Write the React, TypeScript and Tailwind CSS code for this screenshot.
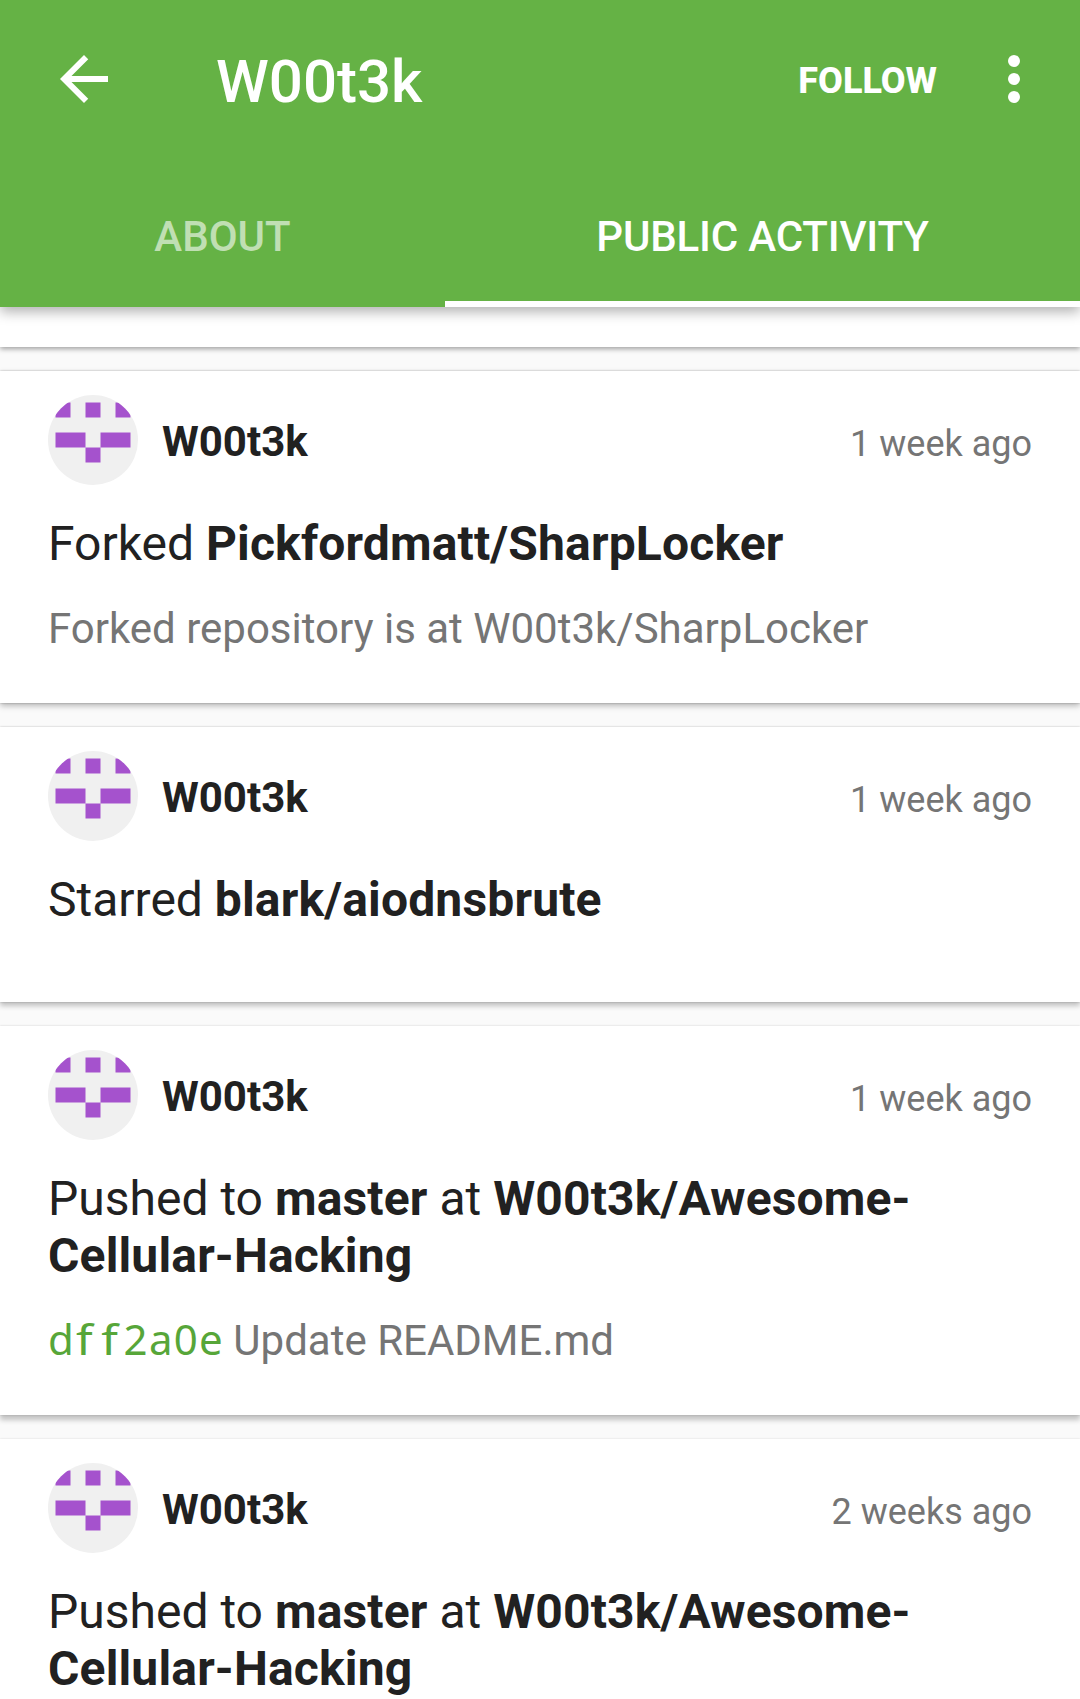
import type { ReactNode } from "react";

function Avatar() {
  return (
    <svg viewBox="0 0 420 420" className="size-[90px] shrink-0 rounded-full bg-[#f0f0f0]" fill="#a552cd">
      <path d="M35 35h70v70H35zM175 35h70v70h-70zM315 35h70v70h-70zM35 175h140v70H35zM245 175h140v70H245zM175 245h70v70h-70z" />
    </svg>
  );
}

type CardProps = {
  time: string;
  className: string;
  title: ReactNode;
  children?: ReactNode;
};

function Card({ time, className, title, children }: CardProps) {
  return (
    <article className={`shrink-0 bg-white px-12 pt-6 ${className}`}>
      <div className="flex h-[90px] items-center">
        <Avatar />
        <span className="ml-6 pt-1 text-[42px] leading-[50px] font-bold">W00t3k</span>
        <span className="ml-auto pt-2 text-[36px] leading-[42px] text-[#757575]">{time}</span>
      </div>
      <h2 className="mt-[30px] text-[48px] leading-[57px]">{title}</h2>
      {children && <p className="mt-8 text-[42px] leading-[50px] text-[#757575]">{children}</p>}
    </article>
  );
}

function Strong({ children }: { children: ReactNode }) {
  return <b className="tracking-[0.16px]">{children}</b>;
}

/* Commit hash set on a 0.6em grid; the narrow f's are widened to fill their cells. */
function Hash() {
  return (
    <span className="mr-[-1px] font-['Noto_Sans',sans-serif] leading-[0] text-[#57a639]">
      <span className="tracking-[-0.015em]">d</span>
      <span className="inline-block w-[1.2em] origin-left translate-x-[3px] scale-x-115 tracking-[0.178em]">ff</span>
      <span className="tracking-[0.03em]">2a0e</span>
    </span>
  );
}

const pushTitle = (
  <>
    Pushed to <Strong>master</Strong> at <Strong>W00t3k/Awesome-<br />Cellular-Hacking</Strong>
  </>
);

export default function App() {
  return (
    <div className="flex h-[1699px] w-[1080px] flex-col overflow-hidden bg-[#fafafa] font-['Roboto',sans-serif] text-[#212121]">
      <header className="relative z-10 flex h-[307px] shrink-0 flex-col bg-[#65b245] text-white shadow-[0_5px_12px_rgba(0,0,0,0.3)]">
        <div className="flex h-[168px] items-start pt-[43px] pr-[30px] pl-12">
          <svg viewBox="0 0 24 24" className="size-[72px]" fill="currentColor">
            <path d="M20 11H7.83l5.59-5.59L12 4l-8 8 8 8 1.41-1.41L7.83 13H20v-2z" />
          </svg>
          <h1 className="ml-24 pt-[3px] text-[60px] leading-[72px] font-medium">W00t3k</h1>
          <span className="mt-[17px] ml-auto text-[36px] leading-[42px] font-extrabold">FOLLOW</span>
          <svg viewBox="0 0 24 24" className="ml-[41px] size-[72px]" fill="currentColor">
            <circle cx="12" cy="6" r="2" />
            <circle cx="12" cy="12" r="2" />
            <circle cx="12" cy="18" r="2" />
          </svg>
        </div>
        <nav className="flex h-[139px] text-[42px] leading-[50px] font-medium">
          <span className="w-[445px] pt-[44px] text-center text-white/60">ABOUT</span>
          <span className="flex-1 border-b-6 border-white pt-[44px] text-center tracking-[-0.18px]">PUBLIC ACTIVITY</span>
        </nav>
      </header>
      <main className="flex flex-col gap-6">
        <div className="h-10 shrink-0 bg-white shadow-[0_2px_5px_rgba(0,0,0,0.36)]" />
        <Card
          time="1 week ago"
          className="h-[332px] shadow-[0_3px_6px_rgba(0,0,0,0.26),0_0_2px_rgba(0,0,0,0.28)]"
          title={<>Forked <Strong>Pickfordmatt/SharpLocker</Strong></>}
        >
          Forked repository is at W00t3k/SharpLocker
        </Card>
        <Card
          time="1 week ago"
          className="h-[275px] shadow-[0_4px_5px_rgba(0,0,0,0.22),0_0_2px_rgba(0,0,0,0.24)]"
          title={<>Starred <Strong>blark/aiodnsbrute</Strong></>}
        />
        <Card
          time="1 week ago"
          className="h-[389px] shadow-[0_5px_5px_rgba(0,0,0,0.22),0_0_2px_rgba(0,0,0,0.18)]"
          title={pushTitle}
        >
          <Hash /> Update README.md
        </Card>
        <Card
          time="2 weeks ago"
          className="h-[389px] shadow-[0_5px_5px_rgba(0,0,0,0.22),0_0_2px_rgba(0,0,0,0.14)]"
          title={pushTitle}
        />
      </main>
    </div>
  );
}
